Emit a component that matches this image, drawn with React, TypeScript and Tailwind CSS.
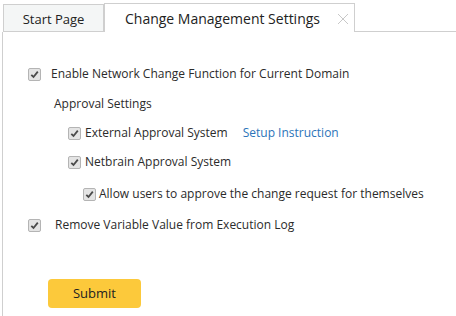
import type { ReactNode } from "react";

function Check({ className = "" }: { className?: string }) {
  return (
    <span
      className={`flex h-[13px] w-[13px] shrink-0 items-center justify-center rounded-[2px] border border-[#b4b4b4] bg-[#e4e4e4] ${className}`}
    >
      <svg width="9" height="9" viewBox="0 0 9 9">
        <path d="M1.3 4.8 L3.5 7 L7.8 1.6" fill="none" stroke="#4a4a4a" strokeWidth="1.8" />
      </svg>
    </span>
  );
}

function Row({ indent, gap, children, className = "" }: { indent: string; gap: string; children: ReactNode; className?: string }) {
  return (
    <div className={`flex h-5 items-center ${indent} ${className}`}>
      <Check />
      <span className={gap}>{children}</span>
    </div>
  );
}

export default function App() {
  return (
    <div
      className="flex h-[316px] w-[456px] flex-col overflow-hidden bg-white text-[12px] text-[#2b2b2b]"
      style={{ fontFamily: '"Open Sans", "Liberation Sans", sans-serif' }}
    >
      <div className="flex h-[32px] items-end pl-[3px]">
        <div className="flex h-[28px] w-[101px] items-center justify-center border border-[#cfcfcf] bg-[#f4f6f6] pt-[3px] text-[13px] text-[#222]">
          Start Page
        </div>
        <div className="relative flex h-[29px] w-[251px] items-center border border-b-0 border-[#cfcfcf] bg-white pl-[20px] text-[14px] text-[#222]">
          Change Management Settings
          <svg className="absolute right-[5px] top-[9px]" width="12" height="12" viewBox="0 0 12 12">
            <path d="M1 1 L11 11 M11 1 L1 11" stroke="#c8c8c8" strokeWidth="1" />
          </svg>
        </div>
        <div className="flex-1 border-b border-[#cfcfcf]" />
      </div>
      <div className="ml-[2px] flex flex-1 flex-col border-l border-[#cfcfcf] pl-[25px] pt-[32px]">
        <Row indent="" gap="ml-[10px]">
          Enable Network Change Function for Current Domain
        </Row>
        <div className="mt-[10px] flex h-5 items-center pl-[26px]">Approval Settings</div>
        <Row indent="pl-[40px]" gap="ml-[4px]" className="mt-[9px]">
          External Approval System
          <span className="ml-[15px] text-[#2b74b9]">Setup Instruction</span>
        </Row>
        <Row indent="pl-[40px]" gap="ml-[4px]" className="mt-[9px]">
          Netbrain Approval System
        </Row>
        <Row indent="pl-[55px]" gap="ml-[3px]" className="mt-[12px]">
          Allow users to approve the change request for themselves
        </Row>
        <Row indent="" gap="ml-[14px]" className="mt-[11px]">
          Remove Variable Value from Execution Log
        </Row>
        <button className="ml-[20px] mt-[44px] flex h-[29px] w-[93px] items-center justify-center rounded-[4px] bg-[#fcc93b] text-[13px] text-[#222]">
          Submit
        </button>
      </div>
    </div>
  );
}
